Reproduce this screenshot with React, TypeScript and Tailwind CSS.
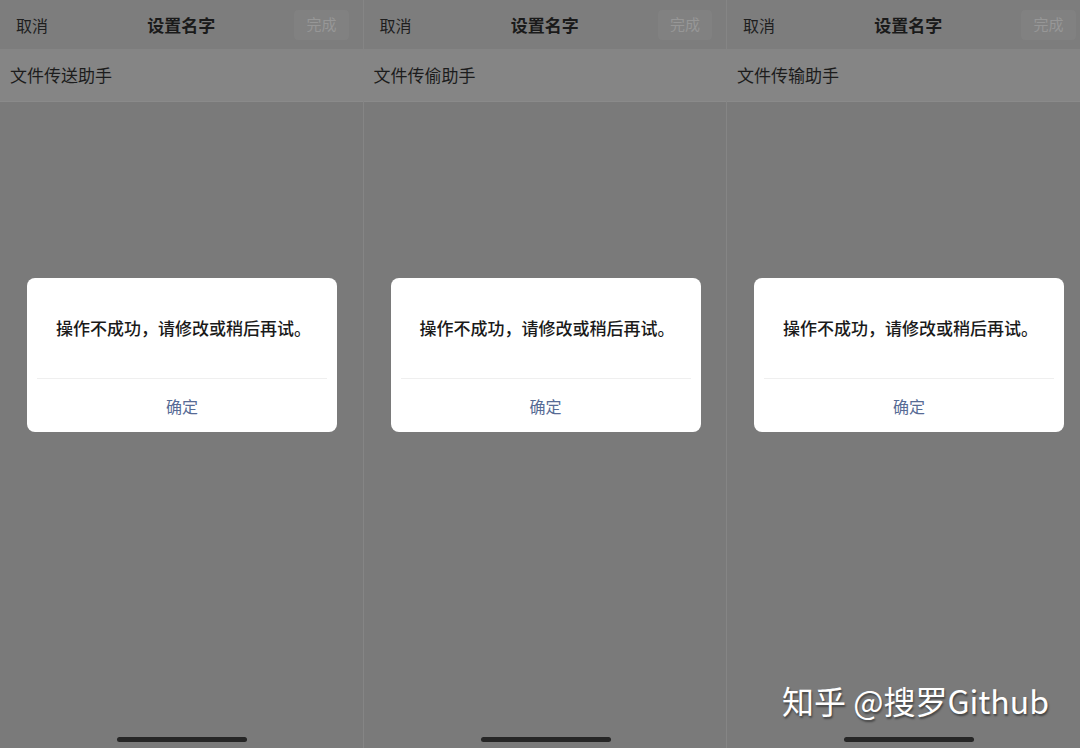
const names = ["文件传送助手", "文件传偷助手", "文件传输助手"];

function Phone({ name }: { name: string }) {
  return (
    <div className="w-[363.5px] h-[748px] shrink-0 flex flex-col bg-[#7a7a7a] border-r border-[#858585]">
      {/* nav bar */}
      <div className="h-[49px] flex items-center justify-between px-4 bg-[#7d7d7d] relative">
        <span className="text-[16px] text-[#1e1e1e]">取消</span>
        <span className="absolute left-1/2 -translate-x-1/2 text-[17px] font-bold text-[#1a1a1a]">设置名字</span>
        <span className="h-[30px] px-[12px] -mr-[2px] flex items-center rounded-[4px] bg-[#818181] text-[15px] text-[#979797]">完成</span>
      </div>
      {/* name input row */}
      <div className="h-[53px] flex items-center px-[10px] bg-[#858585] border-b border-[#8a8a8a]">
        <span className="text-[17px] leading-none -mt-[2px] text-[#1c1c1c]">{name}</span>
      </div>

      {/* alert dialog */}
      <div className="mt-[176px] ml-[27px] w-[310px] h-[154px] bg-white rounded-[8px] flex flex-col">
        <div className="h-[100px] flex items-center justify-center pl-[3px]">
          <span className="text-[17px] leading-none -mt-[2px] font-medium text-[#1a1a1a]">操作不成功，请修改或稍后再试。</span>
        </div>
        <div className="mx-[10px] h-px bg-[#efefef]" />
        <div className="flex-1 flex items-center justify-center">
          <span className="text-[16px] text-[#576b95]">确定</span>
        </div>
      </div>

      <div className="flex-1" />
      {/* home indicator */}
      <div className="ml-[117px] mb-[6px] w-[130px] h-[5px] rounded-full bg-[#262626]" />
    </div>
  );
}

export default function App() {
  return (
    <div
      className="relative w-[1080px] h-[748px] overflow-hidden flex bg-[#7a7a7a]"
      style={{ fontFamily: '"Noto Sans CJK SC", "Noto Sans", sans-serif' }}
    >
      {names.map((n) => (
        <Phone key={n} name={n} />
      ))}
      <div className="absolute left-[782px] top-[676px] text-[32px] text-white [text-shadow:1px_2px_2px_rgba(0,0,0,0.45)]">
        知乎 @搜罗Github
      </div>
    </div>
  );
}
